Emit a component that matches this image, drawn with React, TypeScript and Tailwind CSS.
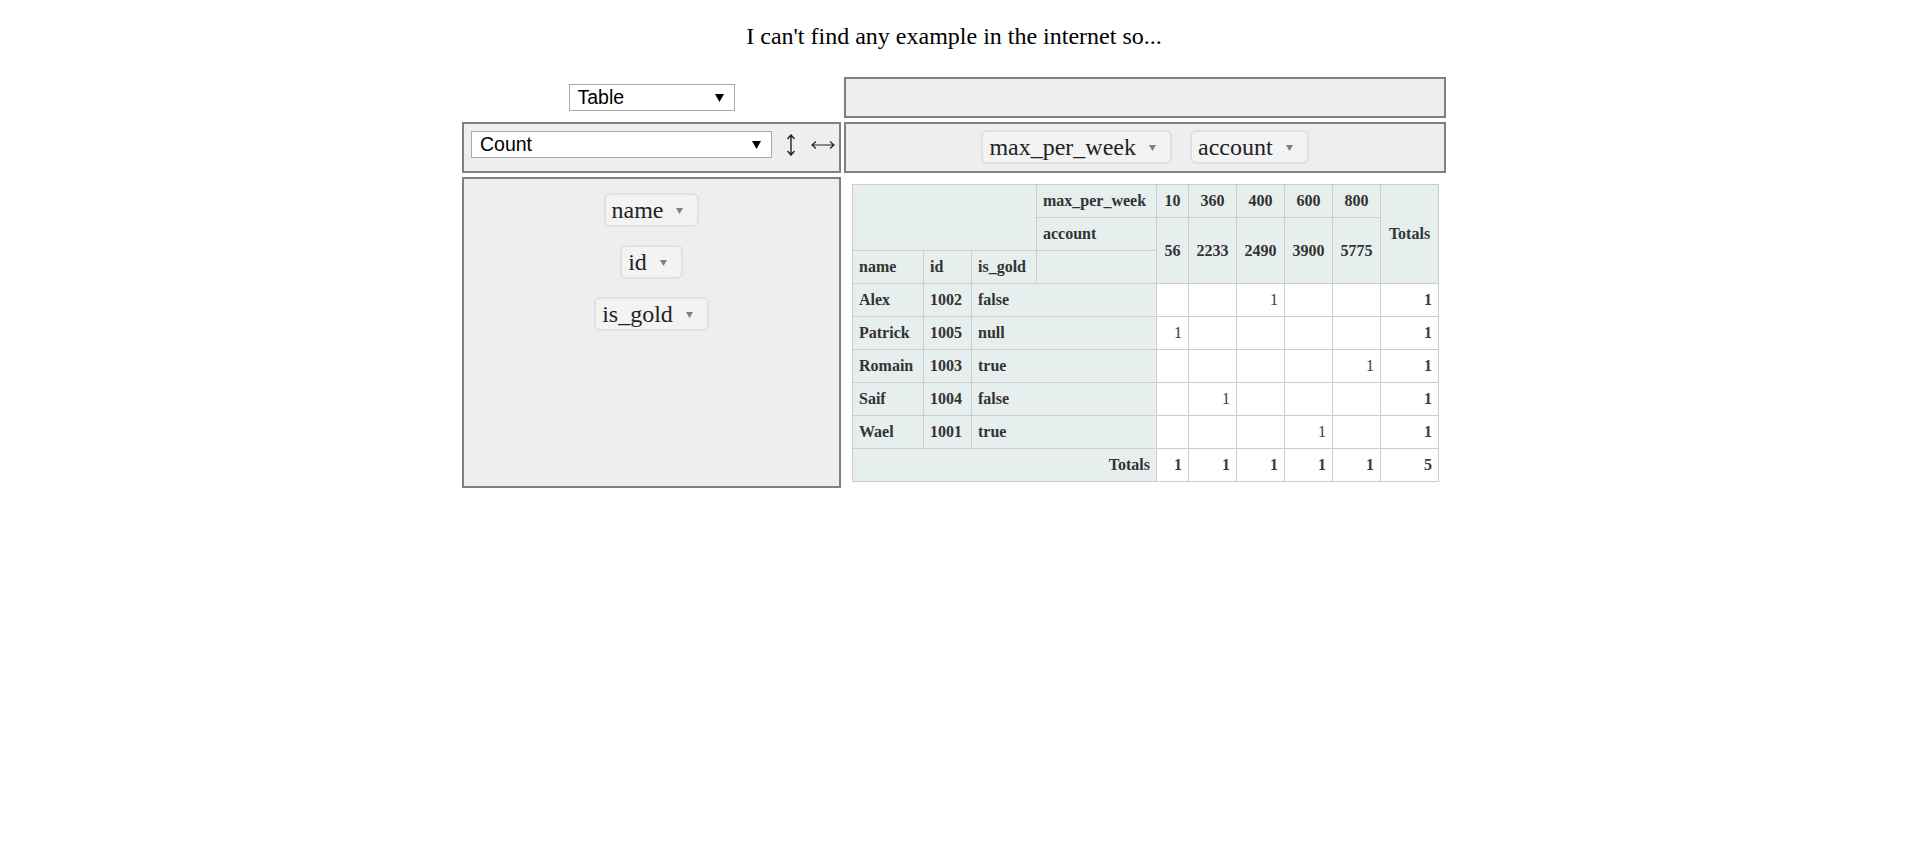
import React from 'react';

const serif = "font-['Liberation_Serif','Times_New_Roman',serif]";
const sans = "font-['Liberation_Sans',Arial,sans-serif]";

const box = 'border-2 border-[#808080] bg-[#eeeeee]';
const th = 'border border-[#cdcdcd] bg-[#e6eeee] px-[6px] py-[7px] leading-[18px] font-bold text-[16px] text-[#333] whitespace-nowrap';
const td = 'border border-[#cdcdcd] bg-white px-[6px] py-[7px] leading-[18px] text-[16px] text-[#3d3d3d] text-right';

const DownTri = ({ w = 9, h = 8, color = '#000' }: { w?: number; h?: number; color?: string }) => (
    <svg width={w} height={h} viewBox={`0 0 ${w} ${h}`}>
        <polygon points={`0,0 ${w},0 ${w / 2},${h}`} fill={color} />
    </svg>
);

const FakeSelect = ({ label, width }: { label: string; width: string }) => (
    <div className={`${width} h-[27px] flex items-center justify-between bg-white border border-[#a9a9a9] pl-[8px] pr-[10px] text-[19.5px] text-black ${sans}`}>
        <span className="leading-none">{label}</span>
        <DownTri />
    </div>
);

const Chip = ({ name }: { name: string }) => (
    <span className={`inline-flex items-center h-[34px] pl-[6px] pr-[14px] border-2 border-[#e0e0e0] bg-[#f3f3f3] rounded-[6px] text-[24px] leading-[26px] text-[#222] ${serif}`}>
        <span>{name}</span>
        <span className="ml-[13px] mt-[1px] flex">
            <DownTri w={7} h={6} color="#808080" />
        </span>
    </span>
);

type Row = { name: string; id: string; gold: string; hit: number };

const rows: Row[] = [
    { name: 'Alex', id: '1002', gold: 'false', hit: 2 },
    { name: 'Patrick', id: '1005', gold: 'null', hit: 0 },
    { name: 'Romain', id: '1003', gold: 'true', hit: 4 },
    { name: 'Saif', id: '1004', gold: 'false', hit: 1 },
    { name: 'Wael', id: '1001', gold: 'true', hit: 3 },
];

const colKeys = [
    ['10', '56'],
    ['360', '2233'],
    ['400', '2490'],
    ['600', '3900'],
    ['800', '5775'],
];

const PivotTable = () => (
    <table className={`table-fixed border-collapse w-[586px] ${serif}`}>
        <colgroup>
            <col className="w-[71px]" />
            <col className="w-[48px]" />
            <col className="w-[65px]" />
            <col className="w-[120px]" />
            <col className="w-[32px]" />
            <col className="w-[48px]" />
            <col className="w-[48px]" />
            <col className="w-[48px]" />
            <col className="w-[48px]" />
            <col className="w-[58px]" />
        </colgroup>
        <thead>
            <tr>
                <th className={th} colSpan={3} rowSpan={2}></th>
                <th className={`${th} text-left`}>max_per_week</th>
                {colKeys.map(([a]) => (
                    <th key={a} className={`${th} text-center`}>{a}</th>
                ))}
                <th className={`${th} text-center`} rowSpan={3}>Totals</th>
            </tr>
            <tr>
                <th className={`${th} text-left`}>account</th>
                {colKeys.map(([a, b]) => (
                    <th key={a} className={`${th} text-center`} rowSpan={2}>{b}</th>
                ))}
            </tr>
            <tr>
                <th className={`${th} text-left`}>name</th>
                <th className={`${th} text-left`}>id</th>
                <th className={`${th} text-left`}>is_gold</th>
                <th className={th}></th>
            </tr>
        </thead>
        <tbody>
            {rows.map((r) => (
                <tr key={r.name}>
                    <th className={`${th} text-left`}>{r.name}</th>
                    <th className={`${th} text-left`}>{r.id}</th>
                    <th className={`${th} text-left`} colSpan={2}>{r.gold}</th>
                    {colKeys.map((_, i) => (
                        <td key={i} className={td}>{i === r.hit ? '1' : ''}</td>
                    ))}
                    <td className={`${td} font-bold`}>1</td>
                </tr>
            ))}
            <tr>
                <th className={`${th} text-right`} colSpan={4}>Totals</th>
                {colKeys.map((_, i) => (
                    <td key={i} className={`${td} font-bold`}>1</td>
                ))}
                <td className={`${td} font-bold`}>5</td>
            </tr>
        </tbody>
    </table>
);

export default function App() {
    return (
        <div className={`min-h-screen bg-white text-black ${serif}`}>
            <p className="pt-[22px] text-center text-[24px] leading-[28px]">
                I can't find any example in the internet so...
            </p>

            <div className="w-[984px] mx-auto mt-[27px] grid grid-cols-[379px_602px] gap-x-[3px] gap-y-[4px]">
                {/* renderer */}
                <div className="h-[41px] flex items-center justify-center">
                    <FakeSelect label="Table" width="w-[166px]" />
                </div>
                <div className={`${box} h-[41px]`}></div>

                {/* aggregator */}
                <div className={`${box} h-[51px] flex items-start pl-[7px] pt-[7px]`}>
                    <FakeSelect label="Count" width="w-[301px]" />
                    <div className="h-[27px] flex items-center ml-[14px] gap-[15px]">
                        <svg width="10" height="22" viewBox="0 0 10 22">
                            <path d="M5 1 V21 M1.5 5 L5 1 L8.5 5 M1.5 17 L5 21 L8.5 17" stroke="#222" strokeWidth="1.4" fill="none" />
                        </svg>
                        <svg width="24" height="10" viewBox="0 0 24 10">
                            <path d="M1 5 H23 M5 1.5 L1 5 L5 8.5 M19 1.5 L23 5 L19 8.5" stroke="#222" strokeWidth="1.2" fill="none" />
                        </svg>
                    </div>
                </div>
                <div className={`${box} h-[51px] flex justify-center items-start pt-[6px] gap-[18px]`}>
                    <Chip name="max_per_week" />
                    <Chip name="account" />
                </div>

                {/* rows + output */}
                <div className={`${box} h-[311px] flex flex-col items-center pt-[14px] gap-[18px]`}>
                    <Chip name="name" />
                    <Chip name="id" />
                    <Chip name="is_gold" />
                </div>
                <div className="pl-[8px] pt-[7px]">
                    <PivotTable />
                </div>
            </div>
        </div>
    );
}
